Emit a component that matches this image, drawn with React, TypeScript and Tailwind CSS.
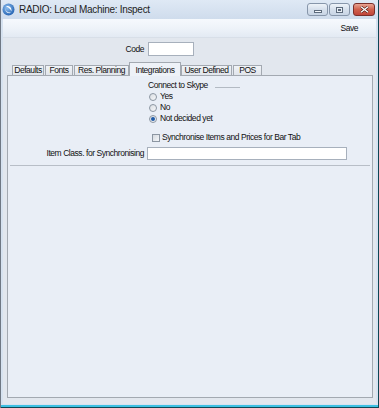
import React from "react";

const txt = "font-['Liberation_Sans',sans-serif] text-[8.5px] tracking-[-0.45px] text-[#111111] leading-none whitespace-nowrap";

function AppIcon() {
  return (
    <svg width="13" height="13" viewBox="0 0 13 13">
      <defs>
        <radialGradient id="ball" cx="40%" cy="35%" r="70%">
          <stop offset="0%" stopColor="#8fc0f0" />
          <stop offset="100%" stopColor="#1f5fb0" />
        </radialGradient>
      </defs>
      <circle cx="6.5" cy="6.5" r="6" fill="url(#ball)" />
      <path d="M4 3.2 C7.5 2.6 10 5 9.4 8.4 C8.6 6 6.8 4.4 4 3.2 Z" fill="#ffffff" />
      <path d="M3 5 C3.6 8.2 6 9.8 9 9.6 C7 11 3.4 10 3 5 Z" fill="#ffffff" opacity="0.85" />
    </svg>
  );
}

function WinButton({ kind }: { kind: "min" | "max" | "close" }) {
  const base = "h-[13px] rounded-[3px] border flex items-center justify-center";
  if (kind === "close")
    return (
      <div className={`${base} w-[22px] border-[#7a2f2a] bg-gradient-to-b from-[#e8a493] via-[#d0604c] to-[#c0443a]`}>
        <svg width="9" height="7" viewBox="0 0 9 7">
          <path d="M1 0.8 L8 6.2 M8 0.8 L1 6.2" stroke="#4a1a16" strokeWidth="2.6" />
          <path d="M1 0.8 L8 6.2 M8 0.8 L1 6.2" stroke="#ffffff" strokeWidth="1.4" />
        </svg>
      </div>
    );
  return (
    <div className={`${base} w-[21px] border-[#8796aa] bg-gradient-to-b from-[#eef3f9] via-[#d6e0ec] to-[#c8d5e5]`}>
      {kind === "min" ? (
        <div className="w-[8px] h-[3px] mt-[4px] bg-[#f4f8fc] border border-[#5d6b7c]" />
      ) : (
        <div className="w-[7px] h-[6px] bg-[#e9eff6] border border-[#5d6b7c] flex items-center justify-center">
          <div className="w-[3px] h-[2px] bg-[#5d6b7c]" />
        </div>
      )}
    </div>
  );
}

const tabs = [
  { label: "Defaults", w: "w-[32px]" },
  { label: "Fonts", w: "w-[28px]" },
  { label: "Res. Planning", w: "w-[55px]" },
  { label: "Integrations", w: "w-[52px]", active: true },
  { label: "User Defined", w: "w-[51px]" },
  { label: "POS", w: "w-[29px]" },
];

function Radio({ checked }: { checked?: boolean }) {
  return (
    <div className="w-[8px] h-[8px] rounded-full border border-[#8c96a2] bg-gradient-to-br from-[#d9dde2] to-[#f7f8fa] flex items-center justify-center">
      {checked && <div className="w-[4px] h-[4px] rounded-full bg-[#1e5aa8]" />}
    </div>
  );
}

export default function App() {
  return (
    <div className="w-[379px] h-[408px] flex flex-col bg-[#d6e2f0] border-l border-l-[#6f7884] border-r border-r-[#0e4654] overflow-hidden">
      {/* title bar */}
      <div className="h-[19px] flex items-center pl-[1px] pr-[3px] bg-gradient-to-b from-[#dfe9f5] to-[#cfdcec]">
        <AppIcon />
        <span className="ml-[4px] font-['Liberation_Sans',sans-serif] text-[10px] tracking-[-0.3px] text-[#1e1e1e] leading-none">
          RADIO: Local Machine: Inspect
        </span>
        <div className="ml-auto flex items-center gap-[1px]">
          <WinButton kind="min" />
          <WinButton kind="max" />
          <div className="w-[1px]" />
          <WinButton kind="close" />
        </div>
      </div>

      {/* client */}
      <div className="flex-1 mx-[2px] mb-[1px] flex flex-col">
        {/* toolbar */}
        <div className="h-[19px] flex items-center justify-end pr-[18px] bg-gradient-to-b from-[#f6f9fd] via-[#eef3f9] to-[#e3eaf3] border-b border-b-[#d8dfe8]">
          <span className={txt}>Save</span>
        </div>

        {/* body */}
        <div className="flex-1 flex flex-col bg-[#e2e7ee] pt-[4px] pl-[4px] pr-[3px] pb-[6px]">
          <div className="h-[14px] flex items-center">
            <div className="w-[137px] flex justify-end">
              <span className={txt}>Code</span>
            </div>
            <div className="ml-[4px] w-[46px] h-[14px] bg-white border border-[#a7b0bc]" />
          </div>

          {/* tabs */}
          <div className="mt-[6px] h-[13px] flex items-end pl-[5px] gap-[1px]">
            {tabs.map((t) =>
              t.active ? (
                <div
                  key={t.label}
                  className={`${t.w} h-[14px] -mb-[1px] -mx-[1px] relative z-10 bg-[#eef2f8] border border-[#a3a9b1] border-b-0 flex items-start justify-center pt-[3px]`}
                >
                  <span className={txt}>{t.label}</span>
                </div>
              ) : (
                <div
                  key={t.label}
                  className={`${t.w} h-[10px] bg-gradient-to-b from-[#f0f3f7] to-[#e1e5eb] border border-[#a3a9b1] border-b-0 flex items-center justify-center`}
                >
                  <span className={txt}>{t.label}</span>
                </div>
              )
            )}
          </div>

          {/* panel */}
          <div className="flex-1 bg-[#e9eef6] border border-[#a3a9b1] flex flex-col">
            <div className="mt-[4px] h-[11px] flex items-center pl-[140px]">
              <span className={txt}>Connect to Skype</span>
              <div className="ml-[7px] w-[25px] h-[1px] bg-[#b3bac3] mt-[3px]" />
            </div>
            {[
              { l: "Yes" },
              { l: "No" },
              { l: "Not decided yet", c: true },
            ].map((r) => (
              <div key={r.l} className="h-[11px] flex items-center pl-[141px] gap-[3px]">
                <Radio checked={r.c} />
                <span className={txt}>{r.l}</span>
              </div>
            ))}

            <div className="mt-[8px] h-[11px] flex items-center pl-[144px] gap-[2px]">
              <div className="w-[8px] h-[8px] border border-[#8c96a2] bg-gradient-to-br from-[#d6dae0] to-[#f4f6f9]" />
              <span className={txt}>Synchronise Items and Prices for Bar Tab</span>
            </div>

            <div className="mt-[4px] h-[13px] flex items-center">
              <div className="w-[136px] flex justify-end">
                <span className={txt}>Item Class. for Synchronising</span>
              </div>
              <div className="ml-[3px] w-[200px] h-[13px] bg-white border border-[#a7b0bc]" />
            </div>

            <div className="mt-[5px] mx-[2px] h-[1px] bg-[#b8bec7]" />
          </div>
        </div>
      </div>
      <div className="h-[2px] bg-[#3cc0e2]" />
      <div className="h-[1px] bg-[#0e4654]" />
    </div>
  );
}
